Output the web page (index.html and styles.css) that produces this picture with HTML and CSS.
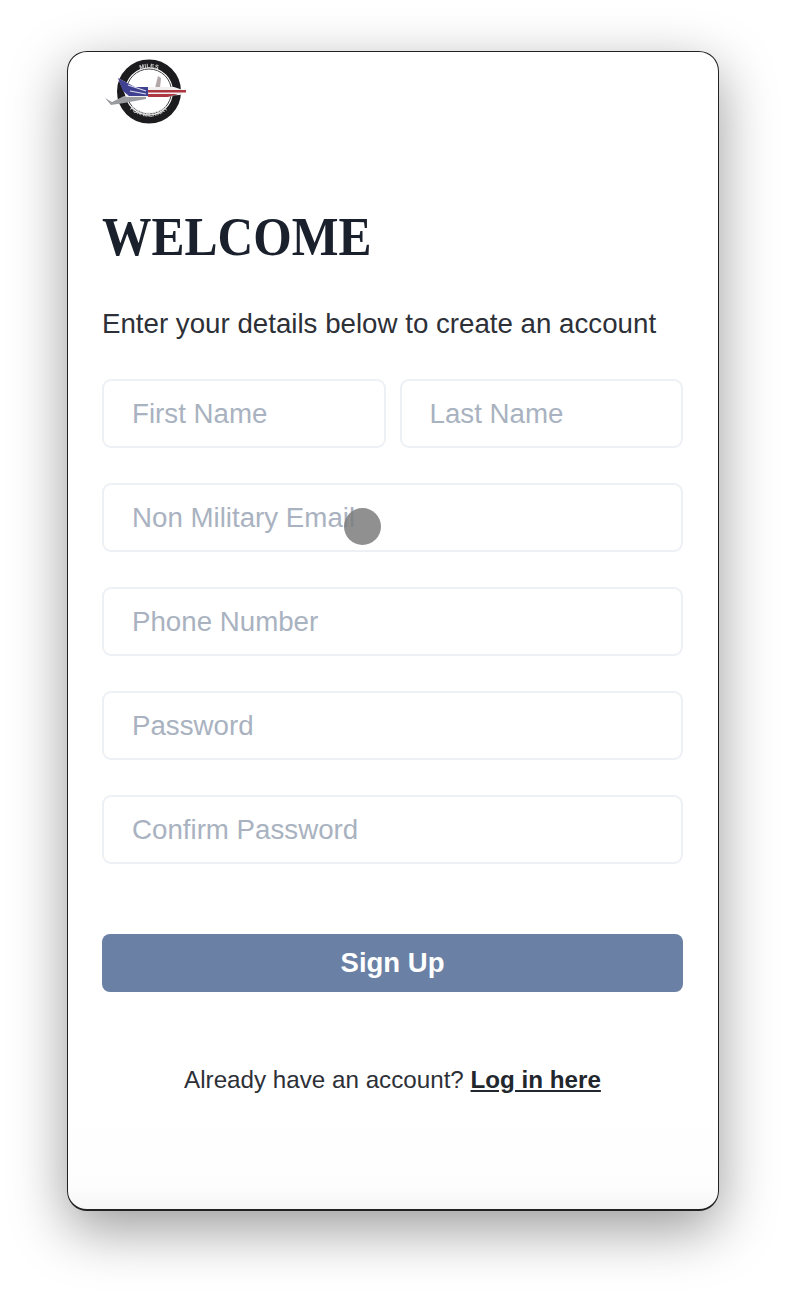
FILE: index.html
```html
<!DOCTYPE html>
<html lang="en">
<head>
    <meta charset="UTF-8">
    <title>Welcome</title>
    <link rel="stylesheet" href="styles.css">
</head>
<body>
<div class="phone">
    <svg class="logo" viewBox="0 0 90 72" width="90" height="72">
        <circle cx="47" cy="36.5" r="28" fill="#fff" stroke="#1c1c1e" stroke-width="8"/>
        <circle cx="47" cy="36.5" r="22.5" fill="none" stroke="#444" stroke-width="1"/>
        <path id="arcTop" d="M24 30A24 24 0 0 1 70 30" fill="none"/>
        <path id="arcBottom" d="M21 44A28 28 0 0 0 73 44" fill="none"/>
        <text class="logo-text"><textPath href="#arcTop" startOffset="50%" text-anchor="middle">MILES</textPath></text>
        <text class="logo-text"><textPath href="#arcBottom" startOffset="50%" text-anchor="middle">FOR MILITARY</textPath></text>
        <path d="M3 43L9 50L22 48L44 44V41L22 41L10 47Z" fill="#9a9c9f"/>
        <path d="M56 21L59 23L58 33L53 33Z" fill="#b3a6a8"/>
        <path d="M16 23L33 32H72L84 36L78 40L46 42L24 42Z" fill="#f2efef"/>
        <path d="M16 23L33 32H46V41L27 41L21 36Z" fill="#3f4090"/>
        <path d="M46 35H84V37.5H46ZM46 39H76L66 42H46Z" fill="#ad3740"/>
        <path d="M26 30L44 36M28 36L44 39" stroke="#dcdcec" stroke-width="1.2"/>
    </svg>

    <h1 class="title">WELCOME</h1>
    <p class="intro">Enter your details below to create an account</p>

    <form class="signup">
        <div class="row">
            <input class="field" type="text" placeholder="First Name">
            <input class="field" type="text" placeholder="Last Name">
        </div>
        <input class="field" type="text" placeholder="Non Military Email">
        <input class="field" type="text" placeholder="Phone Number">
        <input class="field" type="password" placeholder="Password">
        <input class="field" type="password" placeholder="Confirm Password">
        <button class="submit" type="button">Sign Up</button>
    </form>

    <p class="login">Already have an account? <a href="#">Log in here</a></p>

    <div class="touch"></div>
</div>
</body>
</html>
```

FILE: styles.css
```css
* {
    box-sizing: border-box;
}

body {
    margin: 0;
    height: 1294px;
    overflow: hidden;
    background: #fff;
    font-family: "Liberation Sans", Arial, sans-serif;
}

.phone {
    position: relative;
    width: 652px;
    height: 1160px;
    margin: 51px 0 0 67px;
    padding: 3px 35px 0 34px;
    background: linear-gradient(#fff 92%, #fdfdfd 98%, #f6f6f6);
    border: 1px solid #222;
    border-bottom-width: 2px;
    border-radius: 20px;
    box-shadow: 0 18px 56px rgba(0, 0, 0, .4);
}

.logo {
    display: block;
    filter: blur(.6px);
}

.title {
    margin: 79px 0 0;
    font-family: "Liberation Serif", "Times New Roman", serif;
    font-size: 55px;
    line-height: 62px;
    font-weight: bold;
    color: #1a202c;
    transform: scaleX(.9);
    transform-origin: left;
}

.intro {
    margin: 40px 0 0;
    font-size: 27.7px;
    line-height: 32px;
    color: #2d3037;
}

.signup {
    display: flex;
    flex-direction: column;
    gap: 35px;
    margin-top: 39px;
}

.row {
    display: flex;
    gap: 14px;
}

.field {
    display: block;
    width: 100%;
    min-width: 0;
    height: 69px;
    padding: 1px 28px 0;
    background: #fff;
    border: 2px solid #edf0f4;
    border-radius: 9px;
    font-family: inherit;
    font-size: 27.7px;
    color: #2d3037;
}

.field::placeholder {
    color: #a9b2c0;
    opacity: 1;
}

.submit {
    height: 58px;
    margin-top: 35px;
    background: #6a81a5;
    border: 0;
    border-radius: 8px;
    font-family: inherit;
    font-size: 27.5px;
    font-weight: bold;
    color: #fff;
}

.login {
    margin: 72px 0 0;
    text-align: center;
    font-size: 24.2px;
    line-height: 32px;
    color: #2d3037;
}

.login a {
    font-weight: bold;
    color: #22262d;
}

.logo-text {
    font-size: 6px;
    font-weight: bold;
    fill: #d8d8d8;
}

/* touch indicator from the recording */
.touch {
    position: absolute;
    left: 276px;
    top: 456px;
    width: 37px;
    height: 37px;
    border-radius: 50%;
    background: rgba(125, 125, 125, .85);
}
```
